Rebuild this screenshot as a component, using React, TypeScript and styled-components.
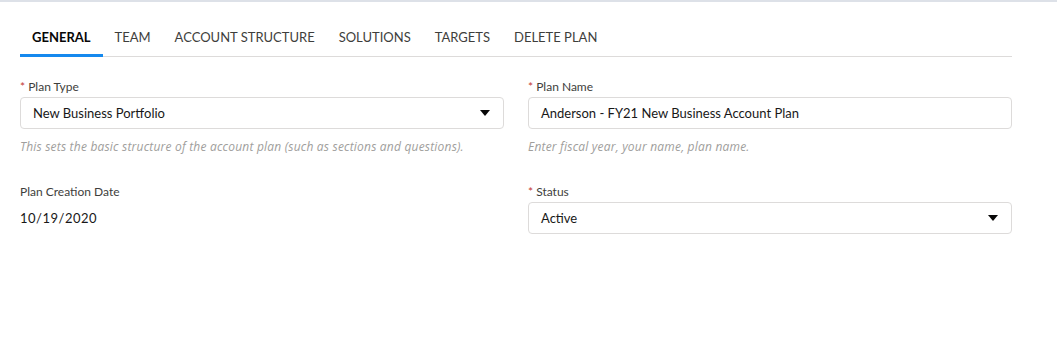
import React from "react";
import styled, { createGlobalStyle } from "styled-components";

const GlobalStyle = createGlobalStyle`
  html, body {
    margin: 0;
    padding: 0;
    background: #ffffff;
  }
  body {
    font-family: Lato, "Open Sans", Arial, sans-serif;
    color: #080707;
  }
`;

const tabs = ["General", "Team", "Account Structure", "Solutions", "Targets", "Delete Plan"];

export default function App() {
  return (
    <Page>
      <GlobalStyle />
      <Content>
        <TabList>
          {tabs.map((t, i) => (
            <Tab key={t} active={i === 0}>
              {t}
            </Tab>
          ))}
        </TabList>
        <FormGrid>
          <Field>
            <Label>
              <Required>*</Required> Plan Type
            </Label>
            <SelectBox>
              <span>New Business Portfolio</span>
              <Caret />
            </SelectBox>
            <Help>This sets the basic structure of the account plan (such as sections and questions).</Help>
          </Field>
          <Field>
            <Label>
              <Required>*</Required> Plan Name
            </Label>
            <InputBox>Anderson - FY21 New Business Account Plan</InputBox>
            <Help>Enter fiscal year, your name, plan name.</Help>
          </Field>
          <Field>
            <Label>Plan Creation Date</Label>
            <StaticValue>10/19/2020</StaticValue>
          </Field>
          <Field>
            <Label>
              <Required>*</Required> Status
            </Label>
            <SelectBox>
              <span>Active</span>
              <Caret />
            </SelectBox>
          </Field>
        </FormGrid>
      </Content>
    </Page>
  );
}

function Caret() {
  return (
    <svg viewBox="0 0 10 6" width="10" height="6">
      <path d="M0 0 H10 L5 6 Z" fill="#080707" />
    </svg>
  );
}

const Page = styled.div`
  width: 1057px;
  height: 339px;
  border-top: 2px solid #dde1e8;
  box-sizing: border-box;
`;

const Content = styled.div`
  width: 992px;
  margin-left: 20px;
`;

const TabList = styled.div`
  display: flex;
  margin-top: 24px;
  border-bottom: 1px solid #dddbda;
`;

const Tab = styled.div<{ active?: boolean }>`
  padding: 1px 12px 7px;
  margin-bottom: -1px;
  font-size: 13px;
  line-height: 20px;
  text-transform: uppercase;
  font-weight: ${({ active }) => (active ? 700 : 400)};
  color: ${({ active }) => (active ? "#080707" : "#3e3e3c")};
  border-bottom: 3px solid ${({ active }) => (active ? "#1589ee" : "transparent")};
`;

const FormGrid = styled.div`
  display: grid;
  grid-template-columns: 484px 484px;
  column-gap: 24px;
  row-gap: 27px;
  margin-top: 21px;
`;

const Field = styled.div`
  display: flex;
  flex-direction: column;
`;

const Label = styled.div`
  font-size: 12px;
  line-height: 18px;
  color: #3e3e3c;
  margin-bottom: 1px;
`;

const Required = styled.abbr`
  color: #c23934;
  text-decoration: none;
`;

const boxStyles = `
  height: 32px;
  box-sizing: border-box;
  border: 1px solid #dddbda;
  border-radius: 4px;
  padding: 0 13px 0 12px;
  display: flex;
  align-items: center;
  font-size: 13px;
  color: #181818;
  background: #ffffff;
`;

const SelectBox = styled.div`
  ${boxStyles}
  justify-content: space-between;
`;

const InputBox = styled.div`
  ${boxStyles}
`;

const Help = styled.div`
  margin-top: 9px;
  font-family: "Open Sans", Lato, Arial, sans-serif;
  font-size: 12px;
  line-height: 18px;
  font-style: italic;
  letter-spacing: 0.2px;
  color: #a09e9c;
`;

const StaticValue = styled.div`
  height: 32px;
  display: flex;
  align-items: center;
  font-size: 13px;
  color: #181818;
  letter-spacing: 0.5px;
`;
